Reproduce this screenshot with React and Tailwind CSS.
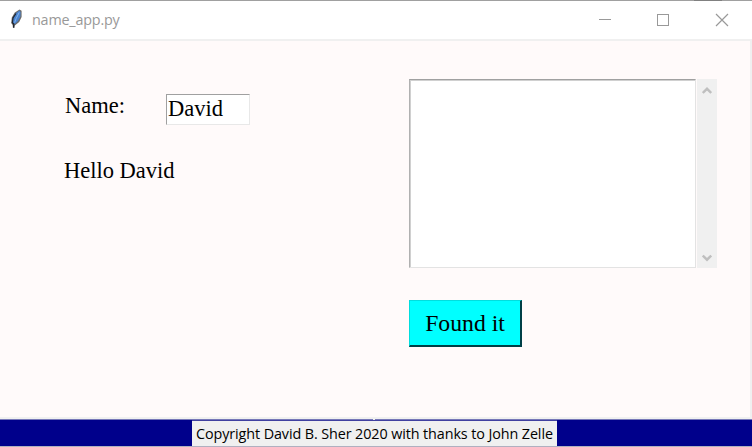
import React from "react";

function FeatherIcon() {
  return (
    <svg width="16" height="20" viewBox="0 0 16 20" className="block">
      <path d="M11.5 .5 L13.6 1.8 L13.6 8 L11.2 13 L6.8 16.4 L6.4 19 L5 18.8 L4.6 16 L3.2 14 L3.8 8.5 L6.8 3.4 Z" fill="#6b6b6b" />
      <path d="M11.5 1.5 L12.6 3 L12.4 7.6 L10 12 L6.5 15.2 L4.4 13.8 L5 8.8 L7.6 4.4 Z" fill="#4a84d0" />
      <path d="M8 4.5 L5 9 L4.4 13.8 L5.8 15 L5.5 18.6" stroke="#20242c" strokeWidth="1.2" fill="none" />
      <path d="M11.2 3.5 L8.2 9.5 L6.6 13.5" stroke="#86b4ea" strokeWidth="1" fill="none" />
    </svg>
  );
}

function TitleBar() {
  return (
    <header className="flex h-[39px] shrink-0 flex-col bg-white">
      <div className="flex h-px shrink-0 bg-[#a0a0a0]">
        <div className="ml-[694px] w-[28px] bg-[#808080]" />
      </div>
      <div className="flex h-[38px] items-start">
        <div className="ml-[8px] mt-[8px] w-[16px]">
          <FeatherIcon />
        </div>
        <span className="ml-[8px] mt-[7px] origin-left scale-x-[0.957] whitespace-nowrap font-['Open_Sans',sans-serif] text-[15px] leading-[22px] tracking-[-0.2px] text-[#999999]">
          name_app.py
        </span>
        <svg className="ml-auto mr-[23px] mt-[12px] block" width="130" height="14" viewBox="0 0 130 14" fill="none" stroke="#999999" shapeRendering="crispEdges">
          <path d="M0 6.5H12" />
          <path d="M58.5 1.5H69.5V12.5H58.5Z" />
          <path d="M117 1L129 13M129 1L117 13" shapeRendering="auto" strokeWidth="1.2" />
        </svg>
      </div>
    </header>
  );
}

function ScrollBar() {
  return (
    <div className="ml-px flex h-[189px] w-[20px] flex-col items-center justify-between bg-[#f0f0f0] pb-[5px] pr-px pt-[7px]">
      <svg width="10" height="9" viewBox="0 0 10 9" fill="none" stroke="#bfbfbf" strokeWidth="2.4">
        <path d="M.8 7L5 2.8L9.2 7" />
      </svg>
      <svg width="10" height="9" viewBox="0 0 10 9" fill="none" stroke="#bfbfbf" strokeWidth="2.4">
        <path d="M.8 1.5L5 5.7L9.2 1.5" />
      </svg>
    </div>
  );
}

export default function App() {
  return (
    <div className="flex h-[447px] w-[752px] flex-col overflow-hidden bg-[#f0f0f0]">
      <TitleBar />
      <main className="mb-[2px] mr-[2px] mt-[2px] flex h-[376px] shrink-0 bg-[#fffafa] font-['Liberation_Serif',serif] text-[22.5px] leading-[26px] text-black">
        <section className="w-[409px] pl-[65px] pt-[52px]">
          <div className="flex h-[33px]">
            <span className="w-[101px]">Name:</span>
            <div className="mt-px h-[31px] w-[84px] border border-b-[#e8e8e8] border-l-[#a0a0a0] border-r-[#e8e8e8] border-t-[#a0a0a0] bg-white pl-px pt-px">
              David
            </div>
          </div>
          <p className="-ml-px mt-[32px] whitespace-nowrap">Hello David</p>
        </section>
        <section className="pt-[38px]">
          <div className="flex">
            <div className="h-[189px] w-[287px] border border-b-[#e3e3e3] border-l-[#b0b0b0] border-r-[#e3e3e3] border-t-[#a0a0a0] bg-white shadow-[inset_1px_1px_0_#d0d0d0]" />
            <ScrollBar />
          </div>
          <button className="mt-[32px] block h-[47px] w-[113px] border-b-2 border-l border-r-2 border-t border-b-[#003f46] border-l-[#00dede] border-r-[#003f46] border-t-[#00dede] bg-[#00ffff] text-center text-[23.7px] leading-[42px]">
            Found it
          </button>
        </section>
      </main>
      <footer className="flex h-[28px] shrink-0 flex-col bg-[#00008b]">
        <div className="flex h-px shrink-0 bg-[#7777b8]">
          <div className="ml-[373px] w-[2px] bg-[#f0f0f0]" />
        </div>
        <div className="flex h-[27px] border-b border-[#b0b0c0]">
          <div className="ml-[192px] w-[365px] border-t border-[#4040a0] bg-[#f0f0f0] pl-[4px] font-['Open_Sans',sans-serif] text-black">
            <span className="inline-block origin-left scale-x-[0.957] whitespace-nowrap text-[15px] leading-[25px] tracking-[-0.1px]">
              Copyright David B. Sher 2020 with thanks to John Zelle
            </span>
          </div>
        </div>
      </footer>
    </div>
  );
}
